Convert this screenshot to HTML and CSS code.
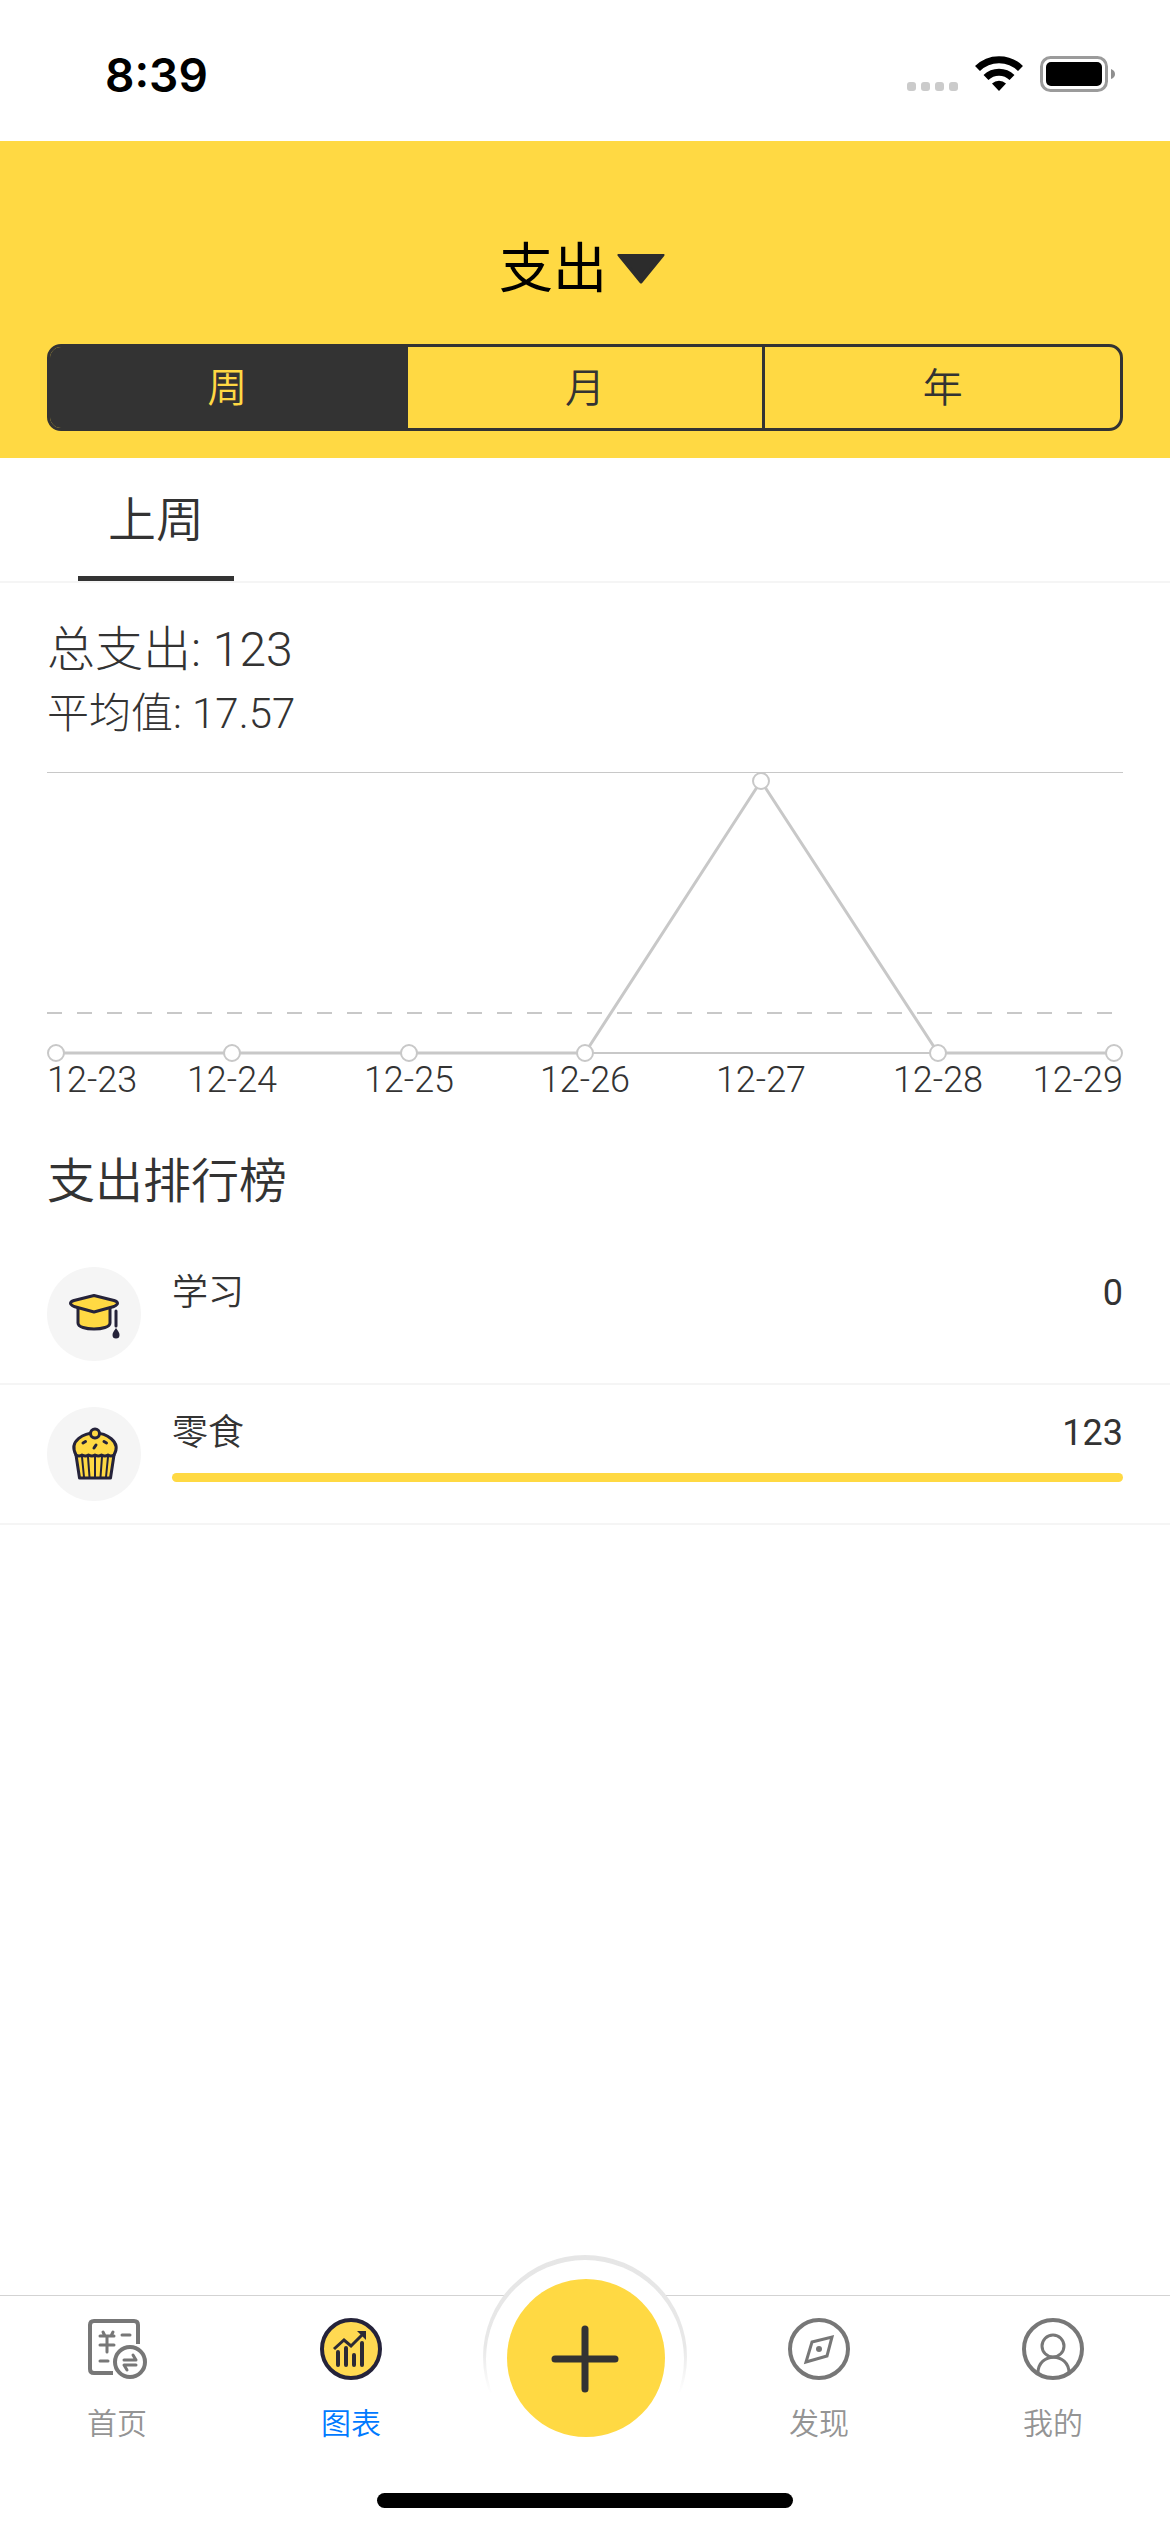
FILE: index.html
```html
<!DOCTYPE html>
<html lang="zh-CN">
<head>
<meta charset="utf-8">
<meta name="viewport" content="width=device-width, initial-scale=1">
<title>图表</title>
<link rel="stylesheet" href="styles.css">
</head>
<body>
<div class="app">
  <div class="status">
    <span class="status-time">8:39</span>
    <svg class="status-icons" width="210" height="38" viewBox="0 0 210 38" aria-hidden="true">
      <g fill="#cbcbcb">
        <rect x="0" y="26" width="9" height="9" rx="3"/>
        <rect x="14" y="26" width="9" height="9" rx="3"/>
        <rect x="28" y="26" width="9" height="9" rx="3"/>
        <rect x="42" y="26" width="9" height="9" rx="3"/>
      </g>
      <g fill="none" stroke="#000" stroke-width="7">
        <path d="M70.500 12.500a30.500 30.500 0 0 1 43 0"/>
        <path d="M79 21.500a18.500 18.500 0 0 1 26 0"/>
      </g>
      <path d="M92 35l-7-7.500a10.500 10.500 0 0 1 14 0z"/>
      <rect x="134.500" y="1.500" width="65" height="33" rx="9" fill="none" stroke="#9b9b9b" stroke-width="3"/>
      <rect x="139" y="6" width="56" height="24" rx="5"/>
      <path d="M204 13q4 1.500 4 5t-4 5z" fill="#8f8f8f"/>
    </svg>
  </div>

  <header class="header">
    <button class="picker" type="button">
      <span>支出</span>
      <svg class="caret" width="48" height="32" viewBox="0 0 48 32" aria-hidden="true"><path d="M2 1h44l-22 27z" fill="#2c2c2c" stroke="#2c2c2c" stroke-width="3" stroke-linejoin="round"/></svg>
    </button>
    <div class="segments">
      <button class="segment is-on" type="button">周</button>
      <button class="segment" type="button">月</button>
      <button class="segment" type="button">年</button>
    </div>
  </header>

  <nav class="periods">
    <button class="period" type="button">上周</button>
  </nav>

  <main class="main">
    <section class="summary">
      <p class="total">总支出: 123</p>
      <p class="average">平均值: 17.57</p>
      <svg class="chart" viewBox="0 0 1076 330" role="img" aria-label="上周支出">
        <g fill="none" stroke="#c8c8c8">
          <path d="M0 .500h1076" stroke-width="1"/>
          <path d="M0 241h1076" stroke-width="2" stroke-dasharray="15 15"/>
          <path d="M9 281h1058" stroke-width="2"/>
          <path d="M9 281h529L714 9l177 272h176" stroke-width="3" stroke-linejoin="round"/>
        </g>
        <g fill="#fff" stroke="#c8c8c8" stroke-width="2">
          <circle cx="9" cy="281" r="8"/>
          <circle cx="185" cy="281" r="8"/>
          <circle cx="362" cy="281" r="8"/>
          <circle cx="538" cy="281" r="8"/>
          <circle cx="714" cy="9" r="8"/>
          <circle cx="891" cy="281" r="8"/>
          <circle cx="1067" cy="281" r="8"/>
        </g>
        <g class="chart-label">
          <text class="first" x="0" y="320">12-23</text>
          <text x="185" y="320">12-24</text>
          <text x="362" y="320">12-25</text>
          <text x="538" y="320">12-26</text>
          <text x="714" y="320">12-27</text>
          <text x="891" y="320">12-28</text>
          <text class="last" x="1076" y="320">12-29</text>
        </g>
      </svg>
    </section>

    <section class="ranking">
      <h2 class="ranking-title">支出排行榜</h2>
      <ul class="ranking-list">
        <li class="item">
          <svg class="item-icon" width="94" height="94" viewBox="0 0 94 94" aria-hidden="true">
            <circle cx="47" cy="47" r="47" fill="#f5f5f5"/>
            <g fill="#ffd943" stroke="#25233a" stroke-width="3" stroke-linejoin="round" stroke-linecap="round">
              <path d="M31 39v17c0 8 32 8 32 0V39z"/>
              <path d="M47 28.500l20 5q7 2.500 0 6L47 45l-20-5.500q-7-3.500 0-6z"/>
              <path d="M69 44v15"/>
            </g>
            <path d="M69 61c2 3 3.500 4.500 3.500 7a3.500 3.500 0 0 1-7 0c0-2.500 1.500-4 3.500-7z" fill="#25233a"/>
          </svg>
          <div class="item-body">
            <div class="item-line"><span>学习</span><span class="amount">0</span></div>
            <div class="bar"><div class="bar-fill" style="width: 0%"></div></div>
          </div>
        </li>
        <li class="item">
          <svg class="item-icon" width="94" height="94" viewBox="0 0 94 94" aria-hidden="true">
            <circle cx="47" cy="47" r="47" fill="#f5f5f5"/>
            <g fill="#ffd943" stroke="#25233a" stroke-width="3" stroke-linejoin="round" stroke-linecap="round">
              <path d="M29 48l3.500 23h31L67 48z"/>
              <path d="M35 50l2 20M41 50l1.500 20M48 50v20M55 50l-1.500 20M61 50l-2 20" fill="none" stroke-width="2"/>
              <path d="M29 48C21 33 38 26 48 26s27 8 19 22q-3 2-6 0-3 2-6.500 0-3 2-6.500 0-3 2-6.500 0-3 2-6.500 0-3 2-6 0z"/>
              <circle cx="48" cy="26.500" r="4.500"/>
              <path d="M36 36l2.500-1.500M47 41l2-3M57 34.500l2.500 1.500" fill="none"/>
            </g>
          </svg>
          <div class="item-body">
            <div class="item-line"><span>零食</span><span class="amount">123</span></div>
            <div class="bar"><div class="bar-fill" style="width: 100%"></div></div>
          </div>
        </li>
      </ul>
    </section>
  </main>

  <footer class="footer">
    <nav class="tabs">
      <a class="tab" href="#home">
        <svg width="62" height="62" viewBox="0 0 62 62" fill="none" stroke="#777" stroke-linecap="round" stroke-linejoin="round" aria-hidden="true">
          <path d="M27 55H8q-4 0-4-4V7q0-4 4-4h40q4 0 4 4v19" stroke-width="4" stroke-linecap="butt"/>
          <path d="M17 14l2 4M27 14l-2 4M14 18h14M14 27h14M21 19v15M36 17h8M14 43h8" stroke-width="3"/>
          <circle cx="44" cy="44" r="15" stroke-width="4"/>
          <path d="M38 42h12l-3-5M50 47H38l3 5" stroke-width="3"/>
        </svg>
        <span>首页</span>
      </a>
      <a class="tab is-on" href="#chart">
        <svg width="62" height="62" viewBox="0 0 62 62" aria-hidden="true">
          <circle cx="31" cy="31" r="29" fill="#ffd952" stroke="#25233a" stroke-width="4"/>
          <g fill="none" stroke="#2c2a35">
            <path d="M18 34v13M26 30v17M34 37v10M42 25v22" stroke-width="4" stroke-linecap="round"/>
            <path d="M14 31l10-9 7 6 12-12" stroke-width="3"/>
          </g>
          <path d="M37 13h9v9z" fill="#2c2a35"/>
        </svg>
        <span>图表</span>
      </a>
      <button class="add" type="button" aria-label="记账">
        <svg width="206" height="206" viewBox="0 0 206 206" aria-hidden="true">
          <defs>
            <linearGradient id="ring" x1="0" y1="0" x2="0" y2="1">
              <stop offset="0" stop-color="#e6e6e6"/>
              <stop offset=".450" stop-color="#e8e8e8"/>
              <stop offset=".680" stop-color="#fff"/>
            </linearGradient>
          </defs>
          <circle cx="103" cy="103" r="102" fill="url(#ring)"/>
          <circle cx="103" cy="105" r="99" fill="#fff"/>
          <circle cx="104" cy="104" r="79" fill="#ffd943"/>
          <path d="M103 75v60M73 105h60" stroke="#333" stroke-width="7" stroke-linecap="round"/>
        </svg>
      </button>
      <a class="tab" href="#discover">
        <svg width="62" height="62" viewBox="0 0 62 62" fill="none" stroke="#777" stroke-width="4" aria-hidden="true">
          <circle cx="31" cy="31" r="29"/>
          <path d="M24 24l20-5-5 19-21 6z" stroke-width="3"/>
          <circle cx="31" cy="31" r="3" fill="#777" stroke="none"/>
        </svg>
        <span>发现</span>
      </a>
      <a class="tab" href="#me">
        <svg width="62" height="62" viewBox="0 0 62 62" fill="none" stroke="#777" stroke-width="4" aria-hidden="true">
          <circle cx="31" cy="31" r="29"/>
          <circle cx="31" cy="28" r="11" stroke-width="3"/>
          <path d="M16 55c0-21 31-21 31 0" stroke-width="3"/>
        </svg>
        <span>我的</span>
      </a>
    </nav>
    <div class="home-indicator"></div>
  </footer>
</div>
</body>
</html>
```
FILE: styles.css
```css
* {
  box-sizing: border-box;
}

body {
  margin: 0;
  background: #fff;
  color: #333;
  font-family: Roboto, "Noto Sans CJK SC", sans-serif;
  font-weight: 300;
}

button {
  margin: 0;
  padding: 0;
  border: 0;
  background: none;
  color: inherit;
  font: inherit;
}

p,
h2,
ul {
  margin: 0;
  padding: 0;
  font-weight: inherit;
  list-style: none;
}

svg {
  display: block;
}

.app {
  display: flex;
  flex-direction: column;
  min-height: 100vh;
}

.status {
  display: flex;
  align-items: center;
  justify-content: space-between;
  height: 141px;
  padding: 8px 53px 0 105px;
}

.status-time {
  color: #000;
  font-family: Inter, sans-serif;
  font-size: 46px;
  font-weight: 600;
}

.header {
  display: flex;
  flex-direction: column;
  align-items: center;
  gap: 36px;
  padding: 91px 47px 27px;
  background: #ffd943;
}

.picker {
  display: flex;
  align-items: center;
  gap: 10px;
  padding-right: 6px;
  color: #000;
  font-size: 54px;
  font-weight: 400;
  line-height: 76px;
}

.segments {
  display: flex;
  width: 100%;
  height: 87px;
  overflow: hidden;
  border: 3px solid #333;
  border-radius: 14px;
}

.segment {
  flex: 1;
  padding-bottom: 6px;
  font-size: 40px;
  font-weight: 350;
}

.segment + .segment {
  border-left: 3px solid #333;
}

.segment.is-on {
  background: #333;
  color: #ffd943;
}

.periods {
  display: flex;
  padding: 0 78px;
  border-bottom: 2px solid #f5f5f5;
}

.period {
  width: 156px;
  height: 123px;
  padding-bottom: 2px;
  border-bottom: 5px solid #333;
  font-size: 48px;
  font-weight: 350;
}

.main {
  flex: 1;
}

.summary {
  padding: 34px 47px 0;
}

.total {
  font-size: 48px;
  line-height: 66px;
}

.average {
  font-size: 42px;
  line-height: 62px;
}

.chart {
  width: 100%;
  height: auto;
  margin-top: 27px;
}

.chart-label {
  fill: #333;
  font-size: 36px;
  text-anchor: middle;
}

.chart-label .first {
  text-anchor: start;
}

.chart-label .last {
  text-anchor: end;
}

.ranking-title {
  padding: 46px 47px 29px;
  font-size: 48px;
  font-weight: 350;
  line-height: 68px;
}

.item {
  display: flex;
  gap: 31px;
  padding: 22px 47px;
  border-bottom: 2px solid #f5f5f5;
}

.item-icon {
  flex: none;
}

.item-body {
  flex: 1;
}

.item-line {
  display: flex;
  justify-content: space-between;
  font-size: 36px;
  font-weight: 350;
  line-height: 52px;
}

.amount {
  font-weight: 400;
}

.bar {
  margin-top: 14px;
}

.bar-fill {
  height: 9px;
  border-radius: 5px;
  background: #ffd943;
}

.footer {
  border-top: 1px solid #d3d3d3;
  background: #fff;
}

.tabs {
  display: grid;
  grid-template-columns: repeat(5, 1fr);
  height: 197px;
}

.tab {
  display: flex;
  flex-direction: column;
  align-items: center;
  gap: 22px;
  padding-top: 22px;
  color: #949494;
  font-size: 30px;
  font-weight: 350;
  line-height: 44px;
  text-decoration: none;
}

.tab.is-on {
  color: #007aff;
}

.add {
  align-self: start;
  justify-self: center;
  margin-top: -42px;
}

.home-indicator {
  width: 416px;
  height: 15px;
  margin: 0 auto 24px;
  border-radius: 8px;
  background: #000;
}
```
